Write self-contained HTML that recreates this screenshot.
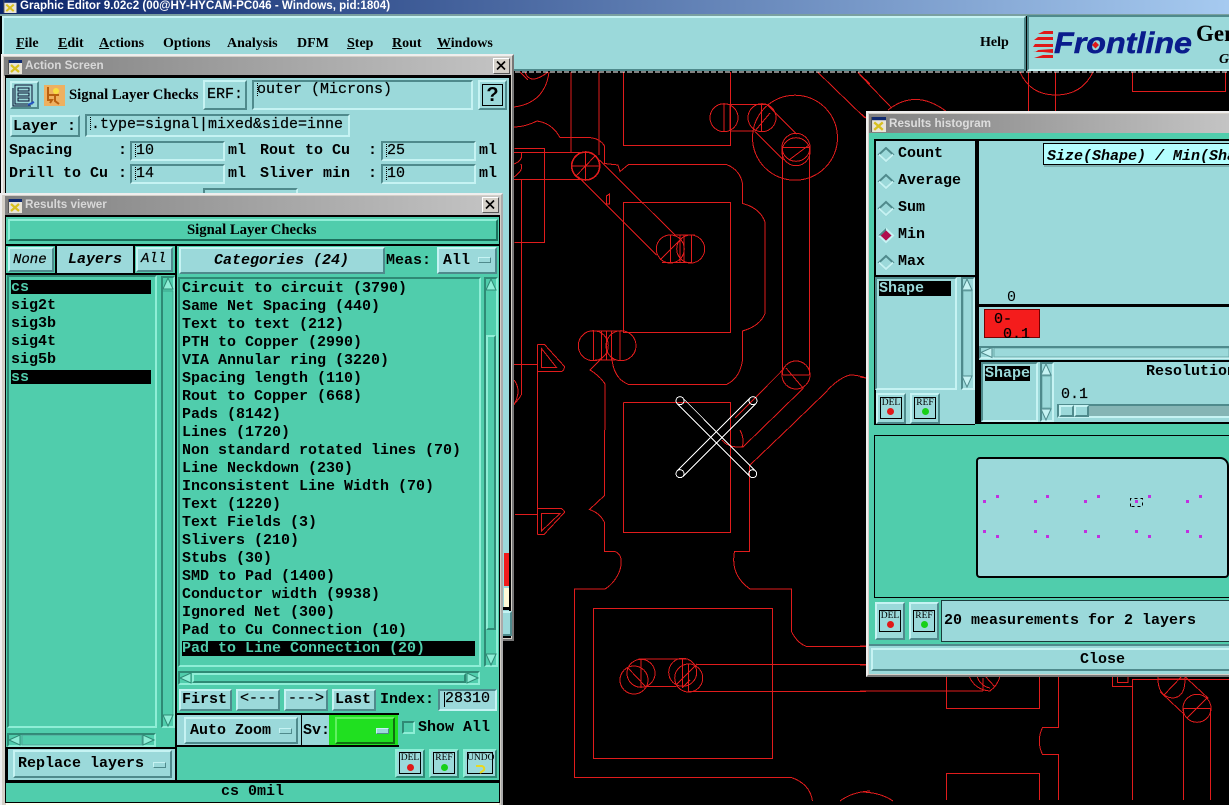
<!DOCTYPE html>
<html><head><meta charset="utf-8"><style>
html,body{margin:0;padding:0;background:#000;width:1229px;height:805px;overflow:hidden}
body{position:relative}
div,svg{position:absolute;box-sizing:border-box}
.m,.mb,.s,.mi{white-space:pre;line-height:16px;height:16px;color:#000}
.m{font:15px/16px "Liberation Mono",monospace;-webkit-text-stroke:.2px #000}
.mb{font:bold 15px/16px "Liberation Mono",monospace}
.mi{font:italic bold 15px/16px "Liberation Mono",monospace}
.s{font:bold 14px/16px "Liberation Serif",serif}
.sl{font-size:14.7px}
.p{background:#9bd9da}
.g{background:#50cdac}
.b{background:#9bd9da;border:2px solid;border-color:#c6f3f3 #4f8a8c #4f8a8c #c6f3f3}
.bg{background:#50cdac;border:2px solid;border-color:#8eeed6 #2f8a75 #2f8a75 #8eeed6}
.i{background:#9bd9da;border:2px solid;border-color:#4f8a8c #c6f3f3 #c6f3f3 #4f8a8c}
.ig{background:#50cdac;border:2px solid;border-color:#2f8a75 #8eeed6 #8eeed6 #2f8a75}
.k{background:#000}
.tb{background:linear-gradient(90deg,#808080,#c4c4c4)}
.tt{font:bold 11.7px/18px "Liberation Sans",sans-serif;color:#d8d8d8;white-space:pre}
.x{background:#d4d0c8;border:1px solid;border-color:#fff #555 #555 #fff}
.w{background:#d4d0c8;border:2px solid;border-color:#eee #777 #777 #eee}
.v{font:9.5px/10px "Liberation Serif",serif;color:#000;text-align:center;white-space:pre}
.o{border:1px solid #000}
.c{border-radius:50%}
.cu{width:1px;height:13px;border-left:1px dotted #000}
</style></head><body>

<svg width="1229" height="805" style="left:0;top:0" fill="none" stroke="#e01c1c" stroke-width="1" shape-rendering="crispEdges">
<symbol id="ic" viewBox="0 0 14 14"><rect width="14" height="14" fill="#e8e4d8"/><rect width="14" height="3" fill="#102a70"/><path d="M3 5l8 7M11 5l-8 7" stroke="#d8c020" stroke-width="2.2" fill="none"/><path d="M0 14V0h1v14z" fill="#555" stroke="none"/></symbol>
<path d="M623.5 72V145.5H730.5V72M623.5 202.5H730.5V332.5H623.5ZM623.5 402.5H730.5V532.5H623.5V402.5M593.5 608.5H772.5V758.5H593.5Z"/>
<path d="M571 72V152M599 72V155M514 152.5H585M514 179.5H590M514.5 148.5H544.5V242.5H514.5M521.5 180V395"/>
<path d="M514 127Q525 127 537 121Q552 123 560 137.5H588Q600 138 604.5 146V163.5L618 165L620 171.5L628.5 164.5H726.5Q740 170 742.5 183.5V203.5Q760 208 765 222V313.5Q760 326 742.5 331V360Q740 378 726.5 384.5H628.5Q612 378 611.5 353"/>
<path d="M605 384V430M605 384Q600 376 590 370L607 353"/>
<path d="M604.5 430V495.5L589.5 509.5Q600 513 604.5 522.5V551.5H615Q624 555 620 570Q615 583 605 589H574.5V777.5H791.5Q810 784 812.5 801"/>
<path d="M749.5 465V551.5H734.5Q730 575 750 589H791.5V631.5Q797 643 806.5 646.5H866M840 801Q852 792 870 791M860 792Q880 792 893 801"/>
<circle cx="585.7" cy="166" r="14" stroke-width="1.6"/><path d="M585.7 152V180M572 166H600M576 176L595 156"/>
<path d="M599.3 160L675.7 235.7M578.3 176.7L656.7 255"/>
<circle cx="670.3" cy="249" r="14"/><circle cx="690.7" cy="249" r="14"/><path d="M670.3 235V262.3M680 235V262M684 235V262M691.7 235V262.3M675 235H695M662 262.3H692M660 260L681.7 238.3"/>
<circle cx="724" cy="117.7" r="14"/><circle cx="762" cy="117.7" r="14"/><circle cx="795" cy="137.7" r="42.5"/>
<path d="M724 104V131M730 104V131M761.7 104V131M730 104.3H767M730 131H755M766.7 104.3L796.7 134M755 131.7L783.3 160M755 131L770 113"/>
<circle cx="796" cy="147.3" r="14"/><circle cx="796" cy="151.7" r="14"/><path d="M783 147.3H809M789 160L809 145"/>
<path d="M782.7 147V375M809.3 147V375"/><circle cx="796" cy="375" r="14"/><path d="M783 375H809M786 368L803 388"/>
<path d="M782.7 370L735 418M803.3 388.3L743 447M786.7 430L750 465M786.7 430L825 393Q838 378 850 375Q858 375 866 378"/>
<path d="M722 440Q728 448 743 447M740 430Q745 440 742 447"/>
<path d="M730.5 402V450"/>
<path d="M514 164Q524 160 521 152M514 177Q524 170 521 164M514 380Q522 390 514 405M521 395Q520 398 514 404"/>
<path d="M514 107Q545 103 549 72M525 72Q530 86 548 72M520 72L528 80"/>
<path d="M537.5 344.5H544.5L564.5 366.5Q564 371 561.5 371.5H537.5M541.5 348.5V367.5H556.5ZM514 364.5H537.5M537.5 344.5V534.5"/>
<path d="M537.5 508.5H561.5Q566 512 564 513L544 534.5H537.5M541.5 513.5H560L541.5 531ZM515 514.5H537.5"/>
<circle cx="593.3" cy="345.7" r="15"/><circle cx="621" cy="345.7" r="15"/><path d="M593.3 331V360M601.7 331V360M606.7 331V360M611.7 331V360M620 331V360M590 331H622M595 360H615"/>
<path d="M606.5 196L609.5 194V204H606.5Z"/>
<circle cx="634" cy="680" r="14"/><circle cx="641" cy="673.3" r="14"/><circle cx="682.7" cy="672.3" r="14"/><circle cx="688.7" cy="678" r="14"/>
<path d="M638.3 659H686.7M646.7 686.7H676.7M696.7 664.3H866M688.7 691.3H866M641 659V688M682.7 659V688M688.7 664V692M628 668L646 687M676 685L697 664M682 688L690 680"/>
<path d="M1020 72Q1030 95 1056 95Q1082 95 1093 72M1028.5 72V111M1055.5 72V111M1132.5 72V91.5H1225.5V72"/>
<path d="M860 75L891.7 108M888 110Q916 88 947 112M818 72.5L865 118M858 72.5L870 84M860 113L866 118M860 377L866 378"/>
<path d="M946.5 676V708.5H1039.5V676M946.5 800V773.5H1039.5V800M860 691H983M1058.5 676V727.5H1042.5Q1036 741 1042.5 754.5H1058.5V800"/>
<path d="M969 676Q975 690 990 691Q998 685 1000 676M977 676Q980 686 990 688M983 678L983 691M985 676L995 687"/>
<path d="M1112.5 676V686.5H1132M1117.5 676V682.5H1128V676M1132.5 679V800M1132 679.5H1229"/>
<path d="M1158 676Q1157 696 1172 698Q1186 698 1185 676M1158 679H1185M1164 695L1182 676"/>
<circle cx="1197" cy="708.3" r="14"/><path d="M1183.3 708V800M1210.7 708V800M1183 708.3H1210.7M1185 676.7L1208.3 698.3M1160 691.7L1185 715M1187 718L1207 698"/>
<path d="M860 646H866M860 665H866"/>
<path d="M515 72H1229" stroke="#fff" stroke-dasharray="5 2"/>
<g stroke="#fff"><circle cx="680" cy="400.7" r="4"/><circle cx="753" cy="400.7" r="4"/><circle cx="680" cy="473.7" r="4"/><circle cx="752.7" cy="473.7" r="4"/>
<path d="M677.2 471L750.2 398M682.8 476.5L755.8 403.5M682.8 398L755.5 471M677.2 403.5L750 476.5"/></g>
</svg>

<!-- top -->
<div style="left:0;top:0;width:1229px;height:14px;background:linear-gradient(90deg,#0a246a,#a6caf0)"></div>
<div style="left:0;top:14px;width:1229px;height:2px;background:#7aa0a0"></div>
<svg style="left:3px;top:0" width="14" height="13"><use href="#ic"/></svg>
<div style="left:20px;top:-2px;color:#fff;font:bold 11.6px/16px 'Liberation Sans',sans-serif;white-space:pre">Graphic Editor 9.02c2 (00@HY-HYCAM-PC046 - Windows, pid:1804)</div>
<div class="b" style="left:2px;top:16px;width:1024px;height:55px"></div>
<div class="i" style="left:1027px;top:15px;width:202px;height:56px;border-width:2px 0 2px 2px"></div>
<div class="s" style="left:16px;top:36px"><u>F</u>ile</div>
<div class="s" style="left:58px;top:36px"><u>E</u>dit</div>
<div class="s" style="left:99px;top:36px"><u>A</u>ctions</div>
<div class="s" style="left:163px;top:36px">Options</div>
<div class="s" style="left:227px;top:36px">Analysis</div>
<div class="s" style="left:297px;top:36px">DFM</div>
<div class="s" style="left:347px;top:36px"><u>S</u>tep</div>
<div class="s" style="left:392px;top:36px"><u>R</u>out</div>
<div class="s" style="left:437px;top:36px"><u>W</u>indows</div>
<div class="s" style="left:980px;top:35px">Help</div>
<svg style="left:1030px;top:20px" width="199" height="50">
<g fill="#e01818"><path d="M14 11H23V14H8ZM8 17H23V20H4ZM5 24H23V27H3ZM3 31H23V33ZM8 30L23 29V32H6ZM13 35H23V38H4Z"/></g>
<text x="24" y="33" font-family="Liberation Sans" font-weight="bold" font-style="italic" font-size="30" fill="#0a1c8c" stroke="#0a1c8c" stroke-width=".5" textLength="138" lengthAdjust="spacingAndGlyphs">Frontline</text>
<path d="M65.500 21.500l3.500 3.500-3.500 3.500-3.500-3.500z" fill="#e01818"/>
<text x="166" y="21" font-family="Liberation Serif" font-weight="bold" font-size="23" fill="#000">Gen</text>
<text x="189" y="43" font-family="Liberation Serif" font-weight="bold" font-style="italic" font-size="14" fill="#000">G</text>
</svg>

<!-- Histogram -->
<div class="w" style="left:866px;top:111px;width:365px;height:566px"></div>
<div class="tb" style="left:869px;top:114px;width:360px;height:19px"></div>
<svg style="left:871px;top:117px" width="15" height="15"><use href="#ic"/></svg>
<div class="tt" style="left:889px;top:115px;color:#ddd">Results histogram</div>
<div class="g" style="left:869px;top:133px;width:360px;height:511px"></div>
<div class="k" style="left:874px;top:139px;width:355px;height:286px"></div>
<div class="p" style="left:876px;top:141px;width:99px;height:134px"></div>
<div class="p" style="left:876px;top:277px;width:99px;height:147px"></div>
<div class="p" style="left:979px;top:141px;width:250px;height:163px"></div>
<div class="p" style="left:979px;top:307px;width:250px;height:53px"></div>
<div class="p" style="left:981px;top:362px;width:248px;height:60px"></div>
<div class="p" style="left:975px;top:424px;width:254px;height:1px;background:#50cdac"></div>
<svg style="left:876px;top:147px" width="22" height="125">
<g stroke-width="2" fill="#9bd9da"><path d="M10 1L3 7.5 10 14 17 7.5Z" stroke="#4f8a8c"/><path d="M10 28L3 34.5 10 41 17 34.500Z" stroke="#4f8a8c"/><path d="M10 55L3 61.5 10 68 17 61.5Z" stroke="#4f8a8c"/><path d="M10 109L3 115.5 10 122 17 115.5Z" stroke="#4f8a8c"/><path d="M10 82L3 88.5 10 95 17 88.5Z" stroke="#c6f3f3" fill="#b00f4e"/></g>
<g fill="none" stroke="#c6f3f3" stroke-width="2"><path d="M3 7.5L10 14 17 7.5M3 34.5L10 41 17 34.5M3 61.5L10 68 17 61.5M3 115.5L10 122 17 115.5"/></g>
<path d="M10 81L2 88.5 10 88.5" fill="#4f8a8c"/><path d="M10 83.5L5 88.5 10 93.5 15 88.5Z" fill="#b00f4e"/>
</svg>
<div class="mb" style="left:898px;top:146px">Count</div>
<div class="mb" style="left:898px;top:173px">Average</div>
<div class="mb" style="left:898px;top:200px">Sum</div>
<div class="mb" style="left:898px;top:227px">Min</div>
<div class="mb" style="left:898px;top:254px">Max</div>
<div class="i" style="left:875px;top:277px;width:82px;height:113px"></div>
<div class="k" style="left:879px;top:281px;width:72px;height:15px"></div>
<div class="mb" style="left:879px;top:281px;color:#9bd9da">Shape</div>
<div class="i" style="left:961px;top:277px;width:14px;height:113px"></div>
<div class="b" style="left:876px;top:393px;width:30px;height:31px"></div>
<div class="b" style="left:910px;top:393px;width:30px;height:31px"></div>
<div class="o" style="left:880px;top:397px;width:22px;height:22px"></div><div class="v" style="left:880px;top:398px;width:22px">DEL</div><div class="c" style="left:887px;top:408px;width:7px;height:7px;background:#e01818"></div>
<div class="o" style="left:914px;top:397px;width:22px;height:22px"></div><div class="v" style="left:914px;top:398px;width:22px">REF</div><div class="c" style="left:922px;top:408px;width:7px;height:7px;background:#18d018"></div>
<div style="left:1043px;top:143px;width:186px;height:22px;background:#b4fefe;border:1px solid #000;border-right:0;box-shadow:1px 2px 0 #7fb0b0"></div>
<div class="mi" style="left:1047px;top:149px;width:182px;overflow:hidden">Size(Shape) / Min(Shape)</div>
<div class="mb" style="left:1007px;top:290px;font-weight:normal">0</div>
<div style="left:984px;top:309px;width:56px;height:29px;background:#f41c1c;border:1px solid #700"></div>
<div class="m" style="left:994px;top:312px">0-</div>
<div style="left:1003px;top:328px;width:30px;height:10px;overflow:hidden"><div class="m" style="left:0;top:-1px">0.1</div></div>
<div class="i" style="left:979px;top:346px;width:250px;height:13px;border-width:2px 0 2px 2px"></div>
<div class="k" style="left:979px;top:360px;width:250px;height:2px"></div>
<div class="i" style="left:981px;top:362px;width:57px;height:60px"></div>
<div class="k" style="left:985px;top:366px;width:45px;height:15px"></div>
<div class="mb" style="left:985px;top:366px;color:#9bd9da">Shape</div>
<div class="i" style="left:1040px;top:362px;width:14px;height:60px"></div>
<div class="mb" style="left:1146px;top:364px">Resolution</div>
<div class="m" style="left:1061px;top:387px">0.1</div>
<div class="i" style="left:1057px;top:404px;width:172px;height:14px;background:#85b5b5;border-right:0"></div>
<div class="b" style="left:1059px;top:405px;width:15px;height:12px"></div><div class="b" style="left:1074px;top:405px;width:15px;height:12px"></div>
<div class="k" style="left:874px;top:435px;width:355px;height:1px"></div>
<div class="k" style="left:874px;top:435px;width:1px;height:163px"></div>
<div class="k" style="left:874px;top:597px;width:355px;height:1px"></div>
<div class="p" style="left:976px;top:457px;width:253px;height:121px;border:2px solid #000;border-radius:4px 9px 4px 4px"></div>
<svg style="left:976px;top:490px" width="240" height="55" fill="#c030e0">
<g transform="translate(-976,-490)">
<rect x="983" y="500" width="3" height="3"/><rect x="996" y="495" width="3" height="3"/><rect x="1034" y="500" width="3" height="3"/><rect x="1046" y="495" width="3" height="3"/><rect x="1084" y="500" width="3" height="3"/><rect x="1097" y="495" width="3" height="3"/><rect x="1135" y="500" width="3" height="3"/><rect x="1148" y="495" width="3" height="3"/><rect x="1186" y="500" width="3" height="3"/><rect x="1199" y="495" width="3" height="3"/>
<rect x="983" y="530" width="3" height="3"/><rect x="996" y="535" width="3" height="3"/><rect x="1034" y="530" width="3" height="3"/><rect x="1046" y="535" width="3" height="3"/><rect x="1084" y="530" width="3" height="3"/><rect x="1097" y="535" width="3" height="3"/><rect x="1135" y="530" width="3" height="3"/><rect x="1148" y="535" width="3" height="3"/><rect x="1186" y="530" width="3" height="3"/><rect x="1199" y="535" width="3" height="3"/>
<path d="M1130.5 506.5V498.5H1142.5V506.5H1130.5Z" fill="none" stroke="#000" stroke-dasharray="3 3"/></g></svg>
<div class="b" style="left:875px;top:602px;width:30px;height:38px"></div>
<div class="b" style="left:909px;top:602px;width:30px;height:38px"></div>
<div class="o" style="left:879px;top:610px;width:22px;height:22px"></div><div class="v" style="left:879px;top:611px;width:22px">DEL</div><div class="c" style="left:887px;top:621px;width:7px;height:7px;background:#e01818"></div>
<div class="o" style="left:913px;top:610px;width:22px;height:22px"></div><div class="v" style="left:913px;top:611px;width:22px">REF</div><div class="c" style="left:921px;top:621px;width:7px;height:7px;background:#18d018"></div>
<div class="p" style="left:941px;top:600px;width:288px;height:42px;border:1px solid #1a3a3a;border-right:0"></div>
<div class="mb" style="left:944px;top:613px">20 measurements for 2 layers</div>
<div style="left:869px;top:644px;width:360px;height:2px;background:#4f8a8c"></div>
<div class="p" style="left:869px;top:646px;width:360px;height:28px"></div>
<div class="b" style="left:871px;top:648px;width:358px;height:23px;border-right:0"></div>
<div class="mb" style="left:1080px;top:652px">Close</div>

<!-- Action -->
<div class="w" style="left:1px;top:54px;width:513px;height:587px"></div>
<div class="tb" style="left:4px;top:57px;width:507px;height:19px"></div>
<svg style="left:8px;top:60px" width="14" height="14"><use href="#ic"/></svg>
<div class="tt" style="left:25px;top:57px">Action Screen</div>
<div class="x" style="left:493px;top:58px;width:17px;height:16px"></div>
<svg style="left:493px;top:58px" width="17" height="16"><path d="M4 3.5l8 8M12 3.5l-8 8" stroke="#000" stroke-width="1.6"/></svg>
<div class="k" style="left:5px;top:75px;width:506px;height:563px"></div>
<div class="p" style="left:6px;top:78px;width:503px;height:558px"></div>
<div class="b" style="left:10px;top:81px;width:29px;height:28px;border-width:2px"></div>
<svg style="left:12px;top:83px" width="25" height="24" fill="none" stroke="#0a1030"><rect x="3" y="2" width="17" height="19"/><rect x="6" y="5" width="11" height="3"/><rect x="6" y="10" width="11" height="3"/><rect x="6" y="15" width="11" height="3"/><path d="M1 5V23H19" /><path d="M16 22l6-3" stroke="#2050c0" stroke-width="2"/></svg>
<svg style="left:44px;top:85px" width="21" height="21"><rect width="21" height="21" fill="#eeb060"/><circle cx="12" cy="6" r="3" fill="#f8e040"/><path d="M4 2V15H8L6 18M4 10H15M11 9V16L15 19" stroke="#b86010" stroke-width="2" fill="none"/></svg>
<div class="s sl" style="left:69px;top:87px">Signal Layer Checks</div>
<div class="b" style="left:203px;top:80px;width:44px;height:30px"></div><div class="m" style="left:207px;top:87px">ERF:</div>
<div class="i" style="left:252px;top:80px;width:221px;height:30px"></div><div class="cu" style="left:257px;top:83px"></div><div class="m" style="left:257px;top:82px">outer (Microns)</div>
<div class="b" style="left:478px;top:80px;width:29px;height:30px"></div><div class="o" style="left:482px;top:84px;width:21px;height:22px"></div>
<div style="left:483px;top:84px;width:19px;text-align:center;font:bold 20px/22px 'Liberation Sans',sans-serif;color:#000">?</div>
<div class="b" style="left:10px;top:115px;width:70px;height:22px"></div><div class="mb" style="left:13px;top:119px">Layer :</div>
<div class="i" style="left:85px;top:114px;width:265px;height:23px"></div><div class="cu" style="left:90px;top:117px"></div><div class="m" style="left:91px;top:117px">.type=signal|mixed&amp;side=inne</div>
<div class="mb" style="left:9px;top:143px">Spacing</div><div class="mb" style="left:118px;top:143px">:</div>
<div class="i" style="left:130px;top:141px;width:95px;height:20px"></div><div class="cu" style="left:135px;top:144px"></div><div class="m" style="left:136px;top:143px">10</div>
<div class="mb" style="left:228px;top:143px">ml</div>
<div class="mb" style="left:260px;top:143px">Rout to Cu</div><div class="mb" style="left:368px;top:143px">:</div>
<div class="i" style="left:381px;top:141px;width:95px;height:20px"></div><div class="cu" style="left:386px;top:144px"></div><div class="m" style="left:387px;top:143px">25</div>
<div class="mb" style="left:479px;top:143px">ml</div>
<div class="mb" style="left:9px;top:166px">Drill to Cu</div><div class="mb" style="left:118px;top:166px">:</div>
<div class="i" style="left:130px;top:164px;width:95px;height:20px"></div><div class="cu" style="left:135px;top:167px"></div><div class="m" style="left:136px;top:166px">14</div>
<div class="mb" style="left:228px;top:166px">ml</div>
<div class="mb" style="left:260px;top:166px">Sliver min</div><div class="mb" style="left:368px;top:166px">:</div>
<div class="i" style="left:381px;top:164px;width:95px;height:20px"></div><div class="cu" style="left:386px;top:167px"></div><div class="m" style="left:387px;top:166px">10</div>
<div class="mb" style="left:479px;top:166px">ml</div>
<div class="i" style="left:203px;top:188px;width:95px;height:20px"></div>
<div style="left:504px;top:553px;width:5px;height:33px;background:#f01c1c"></div>
<div style="left:504px;top:588px;width:5px;height:19px;background:#fffad8"></div>
<div style="left:503px;top:607px;width:6px;height:3px;background:#000"></div>
<div class="b" style="left:503px;top:611px;width:9px;height:25px;border-left:0"></div>

<!-- Results viewer -->
<div class="w" style="left:0;top:193px;width:503px;height:614px;border-color:#eee #aaa #aaa #eee"></div>
<div class="tb" style="left:5px;top:196px;width:495px;height:19px"></div>
<svg style="left:8px;top:199px" width="14" height="14"><use href="#ic"/></svg>
<div class="tt" style="left:25px;top:196px">Results viewer</div>
<div class="x" style="left:482px;top:197px;width:17px;height:16px"></div>
<svg style="left:482px;top:197px" width="17" height="16"><path d="M4 3.5l8 8M12 3.5l-8 8" stroke="#000" stroke-width="1.6"/></svg>
<div class="k" style="left:5px;top:215px;width:495px;height:588px"></div>
<div class="g" style="left:6px;top:217px;width:493px;height:27px"></div>
<div class="bg" style="left:8px;top:219px;width:490px;height:22px;border-color:#8eeed6 #1d6f5d #1d6f5d #8eeed6"></div>
<div class="s sl" style="left:187px;top:222px">Signal Layer Checks</div>
<div class="g" style="left:6px;top:246px;width:169px;height:501px"></div>
<div class="g" style="left:177px;top:246px;width:322px;height:534px"></div>
<!-- tabs -->
<div class="b" style="left:8px;top:247px;width:46px;height:25px"></div><div class="mi" style="left:13px;top:252px;font-weight:normal;-webkit-text-stroke:.2px #000;font-size:14px">None</div>
<div class="k" style="left:55px;top:246px;width:2px;height:28px"></div>
<div class="p" style="left:57px;top:246px;width:76px;height:27px"></div><div class="mi" style="left:68px;top:252px">Layers</div>
<div class="k" style="left:133px;top:246px;width:2px;height:28px"></div>
<div class="k" style="left:6px;top:273px;width:169px;height:2px"></div>
<div class="b" style="left:136px;top:247px;width:37px;height:25px"></div><div class="mi" style="left:141px;top:251px;font-weight:normal;-webkit-text-stroke:.2px #000;font-size:14px">All</div>
<div class="k" style="left:175px;top:244px;width:2px;height:537px"></div>
<div class="b" style="left:179px;top:247px;width:206px;height:27px"></div><div class="mi" style="left:214px;top:253px">Categories (24)</div>
<div class="mb" style="left:386px;top:253px">Meas:</div>
<div class="b" style="left:437px;top:247px;width:60px;height:27px"></div><div class="mb" style="left:443px;top:253px">All</div>
<div class="b" style="left:478px;top:257px;width:13px;height:6px;border-width:1px"></div>
<!-- left list -->
<div class="ig" style="left:7px;top:275px;width:150px;height:453px"></div>
<div class="k" style="left:11px;top:280px;width:140px;height:14px"></div>
<div class="k" style="left:11px;top:370px;width:140px;height:14px"></div>
<div class="mb" style="left:11px;top:280px;color:#50cdac">cs</div>
<div class="mb" style="left:11px;top:298px">sig2t</div>
<div class="mb" style="left:11px;top:316px">sig3b</div>
<div class="mb" style="left:11px;top:334px">sig4t</div>
<div class="mb" style="left:11px;top:352px">sig5b</div>
<div class="mb" style="left:11px;top:370px;color:#50cdac">ss</div>
<div class="ig" style="left:161px;top:276px;width:14px;height:452px"></div>
<div class="ig" style="left:7px;top:733px;width:149px;height:14px"></div>
<div class="k" style="left:6px;top:747px;width:171px;height:2px"></div>
<div class="p" style="left:8px;top:749px;width:167px;height:31px"></div>
<div class="b" style="left:13px;top:750px;width:159px;height:28px"></div><div class="mb" style="left:18px;top:756px">Replace layers</div>
<div class="b" style="left:153px;top:762px;width:13px;height:6px;border-width:1px"></div>
<!-- right list -->
<div class="ig" style="left:178px;top:277px;width:303px;height:390px"></div>
<div class="k" style="left:182px;top:641px;width:293px;height:15px"></div>
<div class="mb" style="left:182px;top:281px">Circuit to circuit (3790)</div>
<div class="mb" style="left:182px;top:299px">Same Net Spacing (440)</div>
<div class="mb" style="left:182px;top:317px">Text to text (212)</div>
<div class="mb" style="left:182px;top:335px">PTH to Copper (2990)</div>
<div class="mb" style="left:182px;top:353px">VIA Annular ring (3220)</div>
<div class="mb" style="left:182px;top:371px">Spacing length (110)</div>
<div class="mb" style="left:182px;top:389px">Rout to Copper (668)</div>
<div class="mb" style="left:182px;top:407px">Pads (8142)</div>
<div class="mb" style="left:182px;top:425px">Lines (1720)</div>
<div class="mb" style="left:182px;top:443px">Non standard rotated lines (70)</div>
<div class="mb" style="left:182px;top:461px">Line Neckdown (230)</div>
<div class="mb" style="left:182px;top:479px">Inconsistent Line Width (70)</div>
<div class="mb" style="left:182px;top:497px">Text (1220)</div>
<div class="mb" style="left:182px;top:515px">Text Fields (3)</div>
<div class="mb" style="left:182px;top:533px">Slivers (210)</div>
<div class="mb" style="left:182px;top:551px">Stubs (30)</div>
<div class="mb" style="left:182px;top:569px">SMD to Pad (1400)</div>
<div class="mb" style="left:182px;top:587px">Conductor width (9938)</div>
<div class="mb" style="left:182px;top:605px">Ignored Net (300)</div>
<div class="mb" style="left:182px;top:623px">Pad to Cu Connection (10)</div>
<div class="mb" style="left:182px;top:641px;color:#50cdac">Pad to Line Connection (20)</div>
<div class="ig" style="left:484px;top:277px;width:14px;height:390px"></div>
<div class="bg" style="left:486px;top:335px;width:10px;height:295px"></div>
<div class="ig" style="left:178px;top:671px;width:302px;height:14px"></div>
<div class="bg" style="left:192px;top:673px;width:274px;height:10px"></div>
<div class="b" style="left:179px;top:689px;width:53px;height:22px"></div><div class="mb" style="left:182px;top:692px">First</div>
<div class="b" style="left:236px;top:689px;width:44px;height:22px"></div><div class="m" style="left:240px;top:691px">&lt;---</div>
<div class="b" style="left:284px;top:689px;width:44px;height:22px"></div><div class="m" style="left:288px;top:691px">---&gt;</div>
<div class="b" style="left:332px;top:689px;width:44px;height:22px"></div><div class="mb" style="left:335px;top:692px">Last</div>
<div class="mb" style="left:380px;top:692px">Index:</div>
<div class="i" style="left:438px;top:689px;width:59px;height:22px"></div><div style="left:444px;top:692px;width:1px;height:15px;background:#000"></div><div class="m" style="left:445px;top:691px">28310</div>
<div class="k" style="left:177px;top:713px;width:222px;height:2px"></div>
<div class="k" style="left:177px;top:745px;width:222px;height:2px"></div>
<div class="p" style="left:177px;top:715px;width:152px;height:30px"></div>
<div class="b" style="left:184px;top:717px;width:114px;height:27px"></div><div class="mb" style="left:190px;top:723px">Auto Zoom</div>
<div class="b" style="left:279px;top:728px;width:13px;height:6px;border-width:1px"></div>
<div class="k" style="left:301px;top:715px;width:1px;height:31px"></div>
<div class="mb" style="left:303px;top:723px">Sv:</div>
<div style="left:329px;top:715px;width:69px;height:30px;background:#20e020"></div>
<div style="left:335px;top:717px;width:60px;height:27px;background:#20e020;border:2px solid;border-color:#60f060 #107010 #107010 #60f060"></div>
<div class="b" style="left:376px;top:728px;width:13px;height:6px;border-width:1px"></div>
<div class="ig" style="left:402px;top:721px;width:13px;height:13px"></div>
<div class="mb" style="left:418px;top:720px">Show All</div>
<div class="bg" style="left:395px;top:749px;width:30px;height:29px;border-color:#8eeed6 #2f8a75 #2f8a75 #8eeed6;background:#9bd9da"></div>
<div class="bg" style="left:429px;top:749px;width:30px;height:29px;background:#9bd9da"></div>
<div class="bg" style="left:463px;top:749px;width:34px;height:29px;background:#9bd9da"></div>
<div class="o" style="left:399px;top:752px;width:22px;height:22px"></div><div class="v" style="left:399px;top:753px;width:22px">DEL</div><div class="c" style="left:407px;top:764px;width:7px;height:7px;background:#e01818"></div>
<div class="o" style="left:433px;top:752px;width:22px;height:22px"></div><div class="v" style="left:433px;top:753px;width:22px">REF</div><div class="c" style="left:441px;top:764px;width:7px;height:7px;background:#18d018"></div>
<div class="o" style="left:467px;top:752px;width:26px;height:22px"></div><div class="v" style="left:467px;top:753px;width:26px">UNDO</div>
<svg style="left:474px;top:763px" width="13" height="11"><path d="M2 3H8Q11 4 10 7L6 10" fill="none" stroke="#e8d820" stroke-width="2"/></svg>
<div class="k" style="left:5px;top:780px;width:495px;height:3px"></div>
<div class="g" style="left:6px;top:783px;width:493px;height:19px"></div>
<div class="mb" style="left:221px;top:784px">cs 0mil</div>
<div style="left:6px;top:803px;width:493px;height:2px;background:#fffff0"></div>

<!-- scroll arrows -->
<svg width="1229" height="805" style="left:0;top:0" >
<g fill="#8eeed6" stroke="#2f8a75">
<path d="M168 278l5 11h-10zM168 726l5-11h-10zM491 279l5 11h-10zM491 665l5-11h-10zM180 678l11-5v10zM478 678l-11-5v10zM9 740l11-5v10zM154 740l-11-5v10z"/>
</g>
<g fill="#c6f3f3" stroke="#4f8a8c">
<path d="M967 279l5 11h-10zM967 387l-5-11h10zM1046 364l5 11h-10zM1046 420l-5-11h10zM981 352.500l11-5v10z"/>
</g>
<path d="M162 291h11v424h-11z" fill="none" stroke="#2f8a75" opacity=".6"/>
<path d="M963 291h9v85h-9zM1042 376h9v32h-9zM994 348h235v9h-235zM22 735h120v10H22z" fill="none" stroke="#4f8a8c" opacity=".6"/>
</svg>
</body></html>
